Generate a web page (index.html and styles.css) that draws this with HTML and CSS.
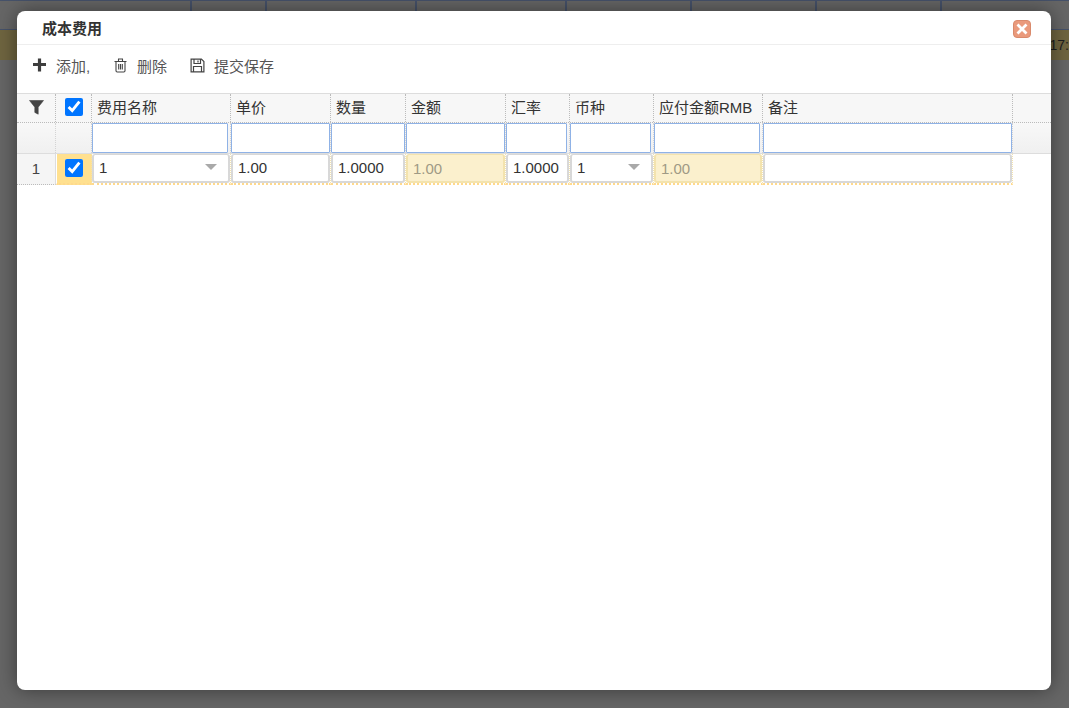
FILE: index.html
```html
<!DOCTYPE html>
<html lang="zh">
<head>
<meta charset="utf-8">
<title>成本费用</title>
<link rel="stylesheet" href="styles.css">
</head>
<body>
<div class="page">
  <div class="bg-head">
    <span class="bg-cell w191"></span><span class="bg-cell w75"></span><span class="bg-cell w150"></span><span class="bg-cell w150"></span><span class="bg-cell w125"></span><span class="bg-cell w125"></span><span class="bg-cell w125"></span><span class="bg-cell grow"></span>
  </div>
  <div class="bg-row"><span class="bg-time">17:</span></div>
</div>

<section class="dialog">
  <header class="title-bar">
    <h1 class="title">成本费用</h1>
    <button class="close" type="button" aria-label="关闭">
      <svg width="12" height="12" viewBox="0 0 12 12"><path d="M1.500 1.500l9 9M10.500 1.500l-9 9" stroke="#fff" stroke-width="2.800" fill="none"/></svg>
    </button>
  </header>

  <nav class="toolbar">
    <a class="tool tool-add">
      <svg class="tool-icon" width="14" height="14" viewBox="0 0 14 14"><path d="M4.900 .5h3.200v4.400h4.900v3.200H8.100v5.400H4.900V8.100H0V4.900h4.900z" fill="#3d3d3d"/></svg>
      <span>添加,</span>
    </a>
    <a class="tool tool-del">
      <svg class="tool-icon" width="14" height="15" viewBox="0 0 14 15" fill="none" stroke="#444" stroke-width="1.100"><path d="M.5 3.500h12M4.500 3.300V1h4v2.300M2 3.500v9.300c0 .7.500 1.200 1.200 1.200h6.600c.7 0 1.200-.5 1.200-1.200V3.500M4.700 6v5.500M6.500 6v5.500M8.300 6v5.500"/></svg>
      <span>删除</span>
    </a>
    <a class="tool tool-save">
      <svg class="tool-icon" width="15" height="15" viewBox="0 0 15 15" fill="none" stroke="#444" stroke-width="1.200"><path d="M1.100 1.100h10.300l2.500 2.500v10.300H1.100zM4 1.300v4.200h6.500V1.300M8 2.500v2M3.500 13.800V8.500h8v5.300"/></svg>
      <span>提交保存</span>
    </a>
  </nav>

  <div class="grid">
    <div class="row head-row">
      <div class="cell c-idx filter-icon">
        <svg width="15" height="15" viewBox="0 0 15 15"><path d="M.5 .5h14L9.200 7.200v7l-3.400-1.800V7.200z" fill="#444" stroke="#444" stroke-width=".6" stroke-linejoin="round"/></svg>
      </div>
      <div class="cell c-chk"><input class="chk" type="checkbox" checked></div>
      <div class="cell c1 label">费用名称</div>
      <div class="cell c2 label">单价</div>
      <div class="cell c3 label">数量</div>
      <div class="cell c4 label">金额</div>
      <div class="cell c5 label">汇率</div>
      <div class="cell c6 label">币种</div>
      <div class="cell c7 label">应付金额RMB</div>
      <div class="cell c8 label">备注</div>
      <div class="cell rest"></div>
    </div>

    <div class="row filter-row">
      <div class="cell c-idx"></div>
      <div class="cell c-chk"></div>
      <div class="cell c1"><input class="filter-input" type="text"></div>
      <div class="cell c2"><input class="filter-input" type="text"></div>
      <div class="cell c3"><input class="filter-input" type="text"></div>
      <div class="cell c4"><input class="filter-input" type="text"></div>
      <div class="cell c5"><input class="filter-input" type="text"></div>
      <div class="cell c6"><input class="filter-input" type="text"></div>
      <div class="cell c7"><input class="filter-input" type="text"></div>
      <div class="cell c8"><input class="filter-input" type="text"></div>
      <div class="cell rest"></div>
    </div>

    <div class="row data-row">
      <div class="cell c-idx idx">1</div>
      <div class="cell c-chk sel"><input class="chk" type="checkbox" checked></div>
      <div class="cell c1 sel"><div class="field combo"><span>1</span><i class="arrow"></i></div></div>
      <div class="cell c2 sel"><div class="field">1.00</div></div>
      <div class="cell c3 sel"><div class="field">1.0000</div></div>
      <div class="cell c4 sel"><div class="field locked">1.00</div></div>
      <div class="cell c5 sel"><div class="field">1.0000</div></div>
      <div class="cell c6 sel"><div class="field combo"><span>1</span><i class="arrow"></i></div></div>
      <div class="cell c7 sel"><div class="field locked">1.00</div></div>
      <div class="cell c8 sel"><div class="field"></div></div>
    </div>
  </div>
</section>
</body>
</html>
```

FILE: styles.css
```css
* { box-sizing: border-box; }

html, body {
  margin: 0;
  height: 100%;
  overflow: hidden;
}

body {
  background: #666;
  font-family: "Liberation Sans", "Noto Sans CJK SC", sans-serif;
  font-size: 15px;
  color: #333;
}

/* dimmed page behind the dialog */
.page { height: 60px; }

.bg-head {
  display: flex;
  height: 30px;
  background: #666;
  border-top: 1px solid #46526a;
  border-bottom: 1px solid #46526a;
}

.bg-cell { border-right: 2px solid #46526a; }
.w191 { width: 192px; }
.w75 { width: 75px; }
.w150 { width: 150px; }
.w125 { width: 125px; }
.grow { flex: 1; border-right: 0; }

.bg-row {
  display: flex;
  justify-content: flex-end;
  align-items: center;
  height: 30px;
  background: #6f6540;
  overflow: hidden;
}

.bg-time {
  color: #1d1d1d;
  font-size: 14px;
}

/* dialog */
.dialog {
  position: absolute;
  left: 17px;
  top: 11px;
  width: 1034px;
  height: 679px;
  background: #fff;
  border-radius: 8px;
  box-shadow: 0 0 20px rgba(0, 0, 0, .45);
  overflow: hidden;
}

.title-bar {
  display: flex;
  align-items: center;
  justify-content: space-between;
  height: 34px;
  padding: 0 20px 0 25px;
  border-bottom: 1px solid #eee;
}

.title {
  margin: 0;
  font-size: 15px;
  font-weight: 700;
  color: #333;
}

.close {
  display: flex;
  align-items: center;
  justify-content: center;
  width: 18px;
  height: 18px;
  margin-top: 2px;
  padding: 0;
  background: #ea9a7c;
  border: 1px solid #d98a6c;
  border-radius: 4px;
}

.toolbar {
  display: flex;
  align-items: center;
  height: 49px;
  padding: 0 0 4px 16px;
  border-bottom: 1px solid #ddd;
  color: #555;
}

.tool {
  display: flex;
  align-items: center;
  gap: 9px;
}

.tool span { margin-bottom: 4px; }
.tool-icon { flex: none; margin-top: -4px; }
.tool-add { width: 81px; }
.tool-del { width: 76px; }

/* grid */
.row { display: flex; }

.cell {
  flex: none;
  height: 100%;
  border-right: 1px dotted #bbb;
}

.c-idx { width: 39px; }
.c-chk { width: 36px; }
.c1 { width: 139px; }
.c2 { width: 100px; }
.c3 { width: 75px; }
.c4 { width: 100px; }
.c5 { width: 64px; }
.c6 { width: 84px; }
.c7 { width: 109px; }
.c8 { width: 250px; }
.rest { flex: 1; border-right: 0; }

.head-row {
  height: 29px;
  background: #f7f7f7;
  border-bottom: 1px dotted #bbb;
}

.filter-row {
  height: 31px;
  background: linear-gradient(#f8f8f8, #f0f0f0);
  border-bottom: 1px solid #ddd;
}

.label {
  display: flex;
  align-items: center;
  padding: 0 0 3px 5px;
  color: #333;
}

.filter-icon,
.c-chk {
  display: flex;
  align-items: center;
  justify-content: center;
}

.filter-icon { padding-bottom: 1px; }

.chk {
  width: 18px;
  height: 18px;
  margin: 0 0 2px;
  accent-color: #0075ff;
}

.filter-input {
  display: block;
  width: 100%;
  height: 30px;
  padding: 0 4px;
  background: #fff;
  border: 1px solid #8fb2e6;
  border-radius: 1px;
  outline: 0;
}

.filter-row .c1,
.filter-row .c5,
.filter-row .c6,
.filter-row .c7 { padding-right: 2px; }
.filter-row .cell { border-right-color: #d4d4d4; }

.data-row { height: 31px; }

.data-row .sel {
  background: #fff;
  border-right: 1px dotted #f2e2ae;
  border-bottom: 2px dotted #ffd98c;
}

.data-row .c-chk {
  background: #ffe08f;
  border-left: 1px solid #fff;
  padding: 0 0 1px;
}

.data-row .chk { margin: 0; }

.idx {
  display: flex;
  align-items: center;
  justify-content: center;
  background: #f5f5f5;
  border-right: 1px solid #ddd;
  border-bottom: 1px dotted #bbb;
  padding-bottom: 1px;
  color: #444;
}

.field {
  display: flex;
  align-items: center;
  justify-content: space-between;
  height: 29px;
  padding: 0 5px 2px;
  background: #fff;
  border: 2px solid #d8d8d8;
  border-top-width: 1px;
  border-radius: 3px;
  color: #333;
}

.field.locked {
  padding-top: 1px;
  padding-bottom: 0;
  background: #fbf0cd;
  border-color: #f3e3ae;
  color: #9f9a85;
}

.arrow {
  width: 0;
  height: 0;
  margin-right: 6px;
  border-left: 6px solid transparent;
  border-right: 6px solid transparent;
  border-top: 6px solid #a9a9a9;
}
```
